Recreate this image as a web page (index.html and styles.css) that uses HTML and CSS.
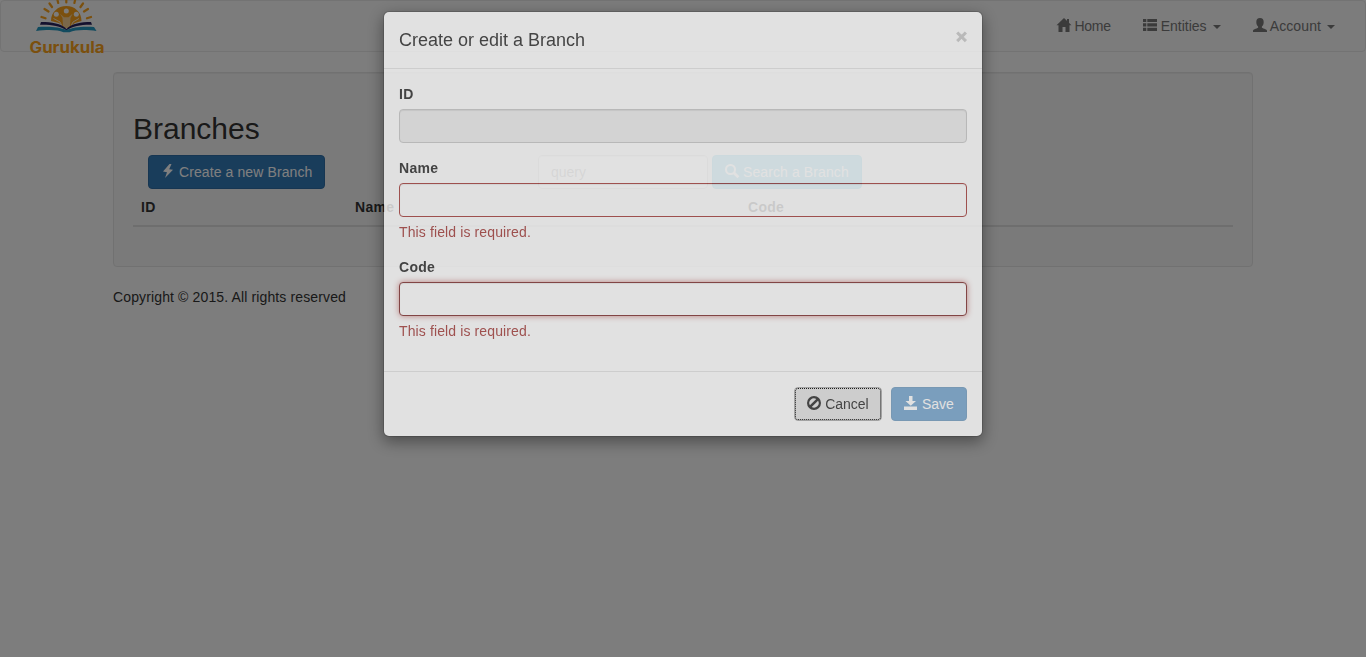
FILE: index.html
```html
<!DOCTYPE html>
<html lang="en">
<head>
<meta charset="utf-8">
<title>Branches</title>
<link rel="stylesheet" href="styles.css">
</head>
<body>
<nav class="navbar">
  <a class="brand" href="#">
    <svg class="logo" width="78" height="54" viewBox="0 0 78 54">
      <path fill="#f7a11c" d="M22 21C22 12 29 6 37.300 6S52.500 12 52.500 21L46 23L39 28L36 28L30 23Z"/>
      <path stroke="#f7a11c" stroke-width="2.200" stroke-linecap="round" d="M12.500 17L16.500 18.300M15.500 9L19.500 11.500M20.500 3.500L23 7M28.500 0L29.200 3M37.300 0V2.500M46.100 0L45.400 3M54 3.500L51.500 7M59 9L55 11.500M62 17L58 18.300"/>
      <g fill="#f8f8f8">
        <circle cx="27.300" cy="14.300" r="2.500"/><circle cx="37.300" cy="11" r="2.500"/><circle cx="47.300" cy="14.300" r="2.500"/>
        <path d="M31 13.800L35 17.200H39.500L43.500 13.800L41.500 18L41 26L37.500 28.500L34 26L33.500 18Z" opacity=".55"/>
      </g>
      <path fill="none" stroke="#f8f8f8" stroke-width=".8" d="M24.500 18.500L31 22L32.500 25M50 18.500L44 22L42.500 25"/>
      <path fill="#28225c" d="M12 22C23 22 32 23.500 37.500 29C43 23.500 52 22 62 22L63 24.800C53 24.500 44 26 37.500 30.500C31 26 22 24.500 11 24.800Z"/>
      <path fill="#2596be" d="M9 27C20 26 31 27 37.500 30C44 27 55 26 65 27L67.500 31C56 29.500 46 29.800 40.500 32.300H34.500C29 29.800 19 29.500 7 31Z"/>
      <text class="logo-text" x=".5" y="52.500" textLength="75" lengthAdjust="spacingAndGlyphs">Gurukula</text>
    </svg>
  </a>
  <ul class="menu">
    <li class="home"><svg class="icon" viewBox="0 0 14 14"><path d="M7 0L14.500 7.200H12.500V14H8.500V9H5.500V14H1.500V7.200H-.5L7 0M10 1h2v4l-2-2z"/></svg> Home</li>
    <li><svg class="icon" viewBox="0 0 14 14"><path d="M0 1h3.300v3H0zM4.300 1H14v3H4.300zM0 5.300h3.300v3.200H0zM4.300 5.300H14v3.200H4.300zM0 9.800h3.300V13H0zM4.300 9.800H14V13H4.300z"/></svg> Entities <b class="caret"></b></li>
    <li class="account"><svg class="icon" viewBox="0 0 14 14"><path d="M7 0C9.500 0 10.700 1.500 10.700 4C10.700 6 10 7.500 8.900 8.500V9.700C10.500 10.700 14 11.200 14 12.800V14H0V12.800C0 11.200 3.500 10.700 5.100 9.700V8.500C4 7.500 3.300 6 3.300 4C3.300 1.500 4.500 0 7 0Z"/></svg> Account <b class="caret"></b></li>
  </ul>
</nav>
<div class="container">
  <main class="well">
    <h2>Branches</h2>
    <div class="toolbar">
      <div class="col-create">
        <button class="btn btn-primary wide"><svg class="icon" viewBox="0 0 14 14"><path d="M8.500 0L2 7.500L6 8.200L4 14L12 5.800L8.200 5.200L10.500 0Z"/></svg> Create a new Branch</button>
      </div>
      <div class="col-search">
        <input class="control query" placeholder="query">
        <button class="btn btn-info wide"><svg class="icon" viewBox="0 0 14 14"><path fill-rule="evenodd" d="M5.500 0A5.500 5.500 0 1 1 5.500 11A5.500 5.500 0 0 1 5.500 0M5.500 2A3.500 3.500 0 1 0 5.500 9A3.500 3.500 0 0 0 5.500 2"/><path d="M7.800 9.800L9.800 7.800L14.300 12.300L12.500 14.200Z"/></svg> Search a Branch</button>
      </div>
    </div>
    <table class="table">
      <thead><tr><th class="c-id">ID</th><th class="c-name">Name</th><th>Code</th></tr></thead>
    </table>
  </main>
  <footer class="footer">Copyright © 2015. All rights reserved</footer>
</div>
<div class="backdrop"></div>
<div class="modal">
  <form class="dialog">
    <header class="modal-header">
      <h4>Create or edit a Branch</h4>
      <span class="close">×</span>
    </header>
    <div class="modal-body">
      <div class="group"><label>ID</label><input class="control readonly" readonly></div>
      <div class="group"><label>Name</label><input class="control error"><p class="help">This field is required.</p></div>
      <div class="group"><label>Code</label><input class="control error focused"><p class="help">This field is required.</p></div>
    </div>
    <div class="modal-footer">
      <button type="button" class="btn btn-cancel"><svg class="icon" viewBox="0 0 14 14"><path fill-rule="evenodd" d="M7 0A7 7 0 1 1 7 14A7 7 0 0 1 7 0M2.900 9.300L9.300 2.900A4.700 4.700 0 0 0 2.900 9.300M4.700 11.100A4.700 4.700 0 0 0 11.100 4.700Z"/></svg> Cancel</button>
      <button type="button" class="btn btn-primary btn-disabled"><svg class="icon" viewBox="0 0 14 14"><path d="M5 0h3.500v5h3.500L6.750 9.800L1.500 5H5zM0 10.500h13V14H0z"/></svg> Save</button>
    </div>
  </form>
</div>
</body>
</html>
```

FILE: styles.css
```css
* { box-sizing: border-box; }
body {
  margin: 0;
  height: 657px;
  overflow: hidden;
  font: 14px/20px "Liberation Sans", Arial, sans-serif;
  color: #333;
  background: #fafafa;
}
.navbar {
  display: flex;
  justify-content: space-between;
  height: 52px;
  margin-bottom: 20px;
  padding: 0 15px 0 28px;
  border: 1px solid #e7e7e7;
  border-radius: 4px;
  background: #f8f8f8;
}
.logo { display: block; margin-top: -1px; overflow: visible; }
.logo-text { font: bold 15.5px Inter, sans-serif; fill: #f7a11c; }
.menu {
  display: flex;
  gap: 2px;
  margin: 0;
  padding: 0;
  list-style: none;
  color: #777;
}
.menu li { padding: 15px; white-space: nowrap; }
.menu .home { letter-spacing: -.25px; }
.menu .account { letter-spacing: .1px; }
.icon {
  display: inline-block;
  width: 14px;
  height: 14px;
  vertical-align: -1px;
  fill: currentColor;
  overflow: visible;
}
.caret {
  display: inline-block;
  margin-left: 2px;
  vertical-align: middle;
  border-top: 4px solid;
  border-left: 4px solid transparent;
  border-right: 4px solid transparent;
}
.container { width: 1140px; margin: 0 auto; }
.well {
  margin-bottom: 20px;
  padding: 19px;
  border: 1px solid #e3e3e3;
  border-radius: 4px;
  background: #f5f5f5;
  box-shadow: inset 0 1px 1px rgba(0, 0, 0, .05);
}
h2 { margin: 20px 0 10px; font-size: 30px; line-height: 33px; font-weight: 500; }
.toolbar { display: flex; }
.col-create { width: 390px; padding-left: 15px; }
.col-search { display: flex; gap: 4px; padding-left: 15px; }
.btn {
  height: 34px;
  padding: 6px 12px;
  border: 1px solid transparent;
  border-radius: 4px;
  font: inherit;
  white-space: nowrap;
}
.wide { letter-spacing: .1px; }
.btn-primary { color: #fff; background: #337ab7; border-color: #2e6da4; }
.btn-info { color: #fff; background: #5bc0de; border-color: #46b8da; }
.btn-cancel {
  width: 88px;
  color: #333;
  background: #e6e6e6;
  border-color: #adadad;
  outline: 1px dotted #000;
  outline-offset: -2px;
}
.btn-disabled { width: 76px; opacity: .65; }
.control {
  display: block;
  width: 100%;
  height: 34px;
  padding: 6px 12px;
  border: 1px solid #ccc;
  border-radius: 4px;
  background: #fff;
  font: inherit;
  box-shadow: inset 0 1px 1px rgba(0, 0, 0, .075);
}
.control::placeholder { color: #999; }
.query { width: 170px; }
.table { width: 100%; margin-bottom: 20px; border-collapse: collapse; table-layout: fixed; }
.table th { padding: 8px; text-align: left; letter-spacing: .3px; border-bottom: 2px solid #ddd; }
.c-id { width: 214px; }
.c-name { width: 393px; }
.footer { letter-spacing: .13px; }
.backdrop { position: fixed; inset: 0; background: #000; opacity: .5; }
.modal {
  position: fixed;
  inset: 0;
  padding-top: 11px;
  opacity: .77;
}
.dialog {
  width: 600px;
  margin: 0 auto;
  border: 1px solid rgba(0, 0, 0, .2);
  border-radius: 6px;
  background: #fff;
  background-clip: padding-box;
  box-shadow: 0 5px 15px rgba(0, 0, 0, .5);
}
.modal-header {
  display: flex;
  justify-content: space-between;
  padding: 15px;
  border-bottom: 1px solid #e5e5e5;
}
h4 { margin: 0; padding-top: 1px; font-size: 18px; line-height: 24.7px; font-weight: 500; }
.close {
  margin-top: -1px;
  font-size: 19px;
  line-height: 21px;
  font-weight: bold;
  color: #000;
  opacity: .2;
  -webkit-text-stroke: 1px #000;
}
.modal-body { padding: 15px; }
.group { margin-bottom: 15px; }
.group label { display: block; margin-bottom: 5px; font-weight: bold; letter-spacing: .3px; }
.readonly { background: #eee; }
.error { border-color: #a94442; }
.focused { border-color: #843534; box-shadow: inset 0 1px 1px rgba(0, 0, 0, .075), 0 0 6px #ce8483; }
.help { margin: 5px 0 0; color: #a94442; letter-spacing: .12px; }
.modal-footer {
  display: flex;
  justify-content: flex-end;
  gap: 9px;
  padding: 15px;
  border-top: 1px solid #e5e5e5;
}
```
